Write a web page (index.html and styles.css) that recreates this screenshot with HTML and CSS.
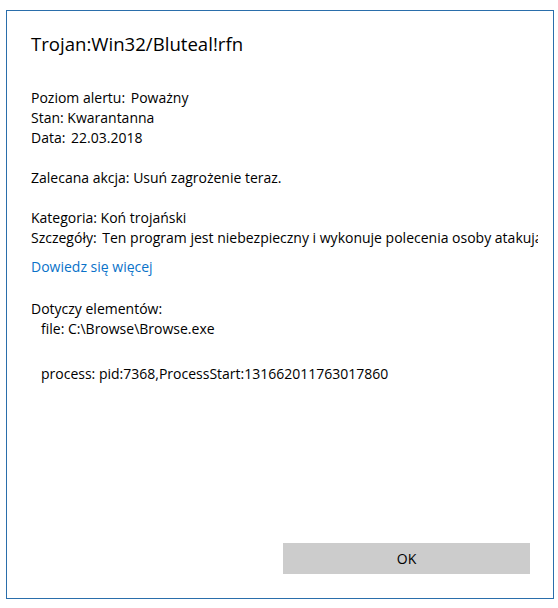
FILE: index.html
```html
<!DOCTYPE html>
<html lang="pl">
<head>
    <meta charset="UTF-8">
    <title>Trojan:Win32/Bluteal!rfn</title>
    <link rel="stylesheet" href="styles.css">
</head>
<body>
    <div class="dialog">
        <div class="content">
            <h1 class="title">Trojan:Win32/Bluteal!rfn</h1>

            <div class="group">
                <div class="row"><span class="label">Poziom alertu:</span> <span class="gap">Poważny</span></div>
                <div class="row">Stan: Kwarantanna</div>
                <div class="row"><span class="label">Data:</span> <span class="gap">22.03.2018</span></div>
            </div>

            <div class="group">
                <div class="row">Zalecana akcja: Usuń zagrożenie teraz.</div>
            </div>

            <div class="group">
                <div class="row">Kategoria: Koń trojański</div>
                <div class="row"><span class="label">Szczegóły:</span> <span class="gap">Ten program jest niebezpieczny i wykonuje polecenia osoby atakującej.</span></div>
            </div>

            <a class="more" href="#">Dowiedz się więcej</a>

            <div class="group items">
                <div class="row">Dotyczy elementów:</div>
                <div class="row indent">file: C:\Browse\Browse.exe</div>
                <div class="row indent process">process: pid:7368,ProcessStart:131662011763017860</div>
            </div>
        </div>

        <div class="buttons">
            <button type="button" class="button">OK</button>
        </div>
    </div>
</body>
</html>
```

FILE: styles.css
```css
html, body {
    margin: 0;
    padding: 0;
    background-color: #fff;
}
body {
    font-family: "Open Sans", "Noto Sans", sans-serif;
    font-size: 14px;
    line-height: 20px;
    color: #000;
    padding: 10px 5px 9px 6px;
}
.dialog {
    box-sizing: border-box;
    width: 548px;
    height: 589px;
    border: 1px solid #2a6eab;
    display: flex;
    flex-direction: column;
}
.content {
    flex: 1;
    margin-right: 15px;
    padding: 19px 0 0 24px;
    overflow: hidden;
}
.title {
    margin: 0 0 30px;
    font-size: 18.6px;
    font-weight: normal;
    line-height: 28px;
}
.group {
    margin-bottom: 20px;
}
.row {
    white-space: nowrap;
}
.gap {
    margin-left: 2px;
}
.more {
    display: block;
    margin-top: -11px;
    margin-bottom: 22px;
    color: #0a72c9;
    text-decoration: none;
}
.indent {
    padding-left: 10px;
}
.process {
    margin-top: 25px;
}
.buttons {
    display: flex;
    justify-content: flex-end;
    padding: 0 23px 24px 0;
}
.button {
    width: 247px;
    height: 31px;
    border: none;
    background-color: #ccc;
    font-family: inherit;
    font-size: 14px;
    color: #000;
    padding: 0;
}
```
